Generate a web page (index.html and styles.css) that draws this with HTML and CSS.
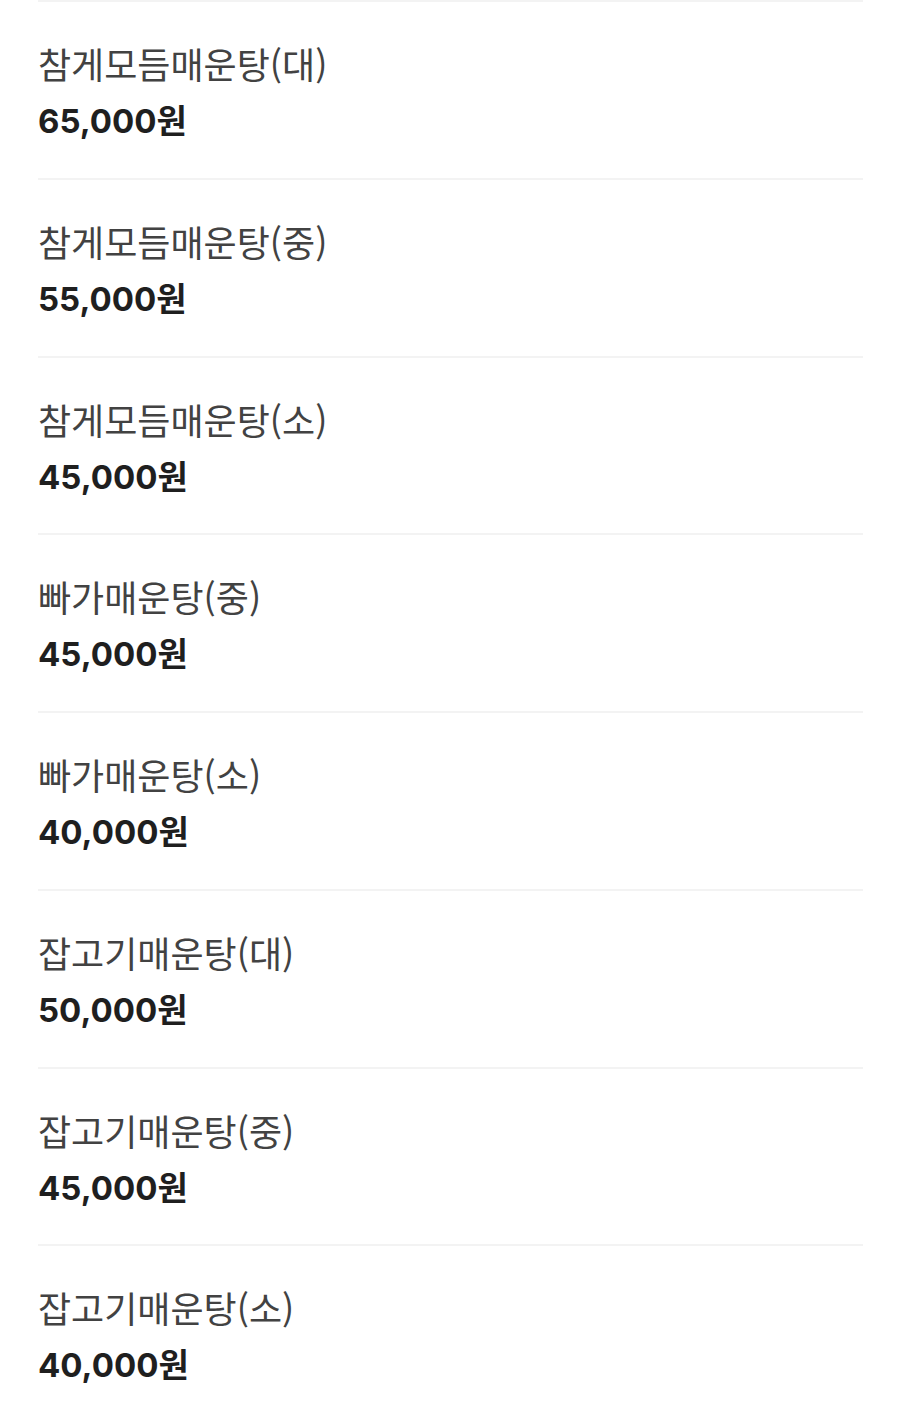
FILE: index.html
```html
<!DOCTYPE html>
<html lang="ko">
<head>
<meta charset="utf-8">
<link rel="stylesheet" href="styles.css">
</head>
<body>
<ul class="menu">
  <li class="item"><span class="name">참게모듬매운탕(대)</span><span class="price">65,000원</span></li>
  <li class="item"><span class="name">참게모듬매운탕(중)</span><span class="price">55,000원</span></li>
  <li class="item"><span class="name">참게모듬매운탕(소)</span><span class="price">45,000원</span></li>
  <li class="item"><span class="name">빠가매운탕(중)</span><span class="price">45,000원</span></li>
  <li class="item"><span class="name">빠가매운탕(소)</span><span class="price">40,000원</span></li>
  <li class="item"><span class="name">잡고기매운탕(대)</span><span class="price">50,000원</span></li>
  <li class="item"><span class="name">잡고기매운탕(중)</span><span class="price">45,000원</span></li>
  <li class="item"><span class="name">잡고기매운탕(소)</span><span class="price">40,000원</span></li>
</ul>
</body>
</html>
```
FILE: styles.css
```css
html, body {
  margin: 0;
  padding: 0;
  background: #ffffff;
}
body {
  font-family: "Noto Sans CJK KR", "Noto Sans", sans-serif;
}
.menu {
  list-style: none;
  margin: 0;
  padding: 0 37px 0 38px;
}
.item {
  box-sizing: border-box;
  height: 177.75px;
  border-top: 2px solid #f3f3f3;
  padding-top: 39px;
  display: flex;
  flex-direction: column;
  gap: 16px;
}
.name {
  font-size: 36px;
  line-height: 44px;
  color: #424242;
  font-weight: 400;
}
.price {
  font-family: Inter, "Noto Sans CJK KR", sans-serif;
  font-size: 33px;
  line-height: 40px;
  font-weight: 700;
  color: #1f1f1f;
}
```
